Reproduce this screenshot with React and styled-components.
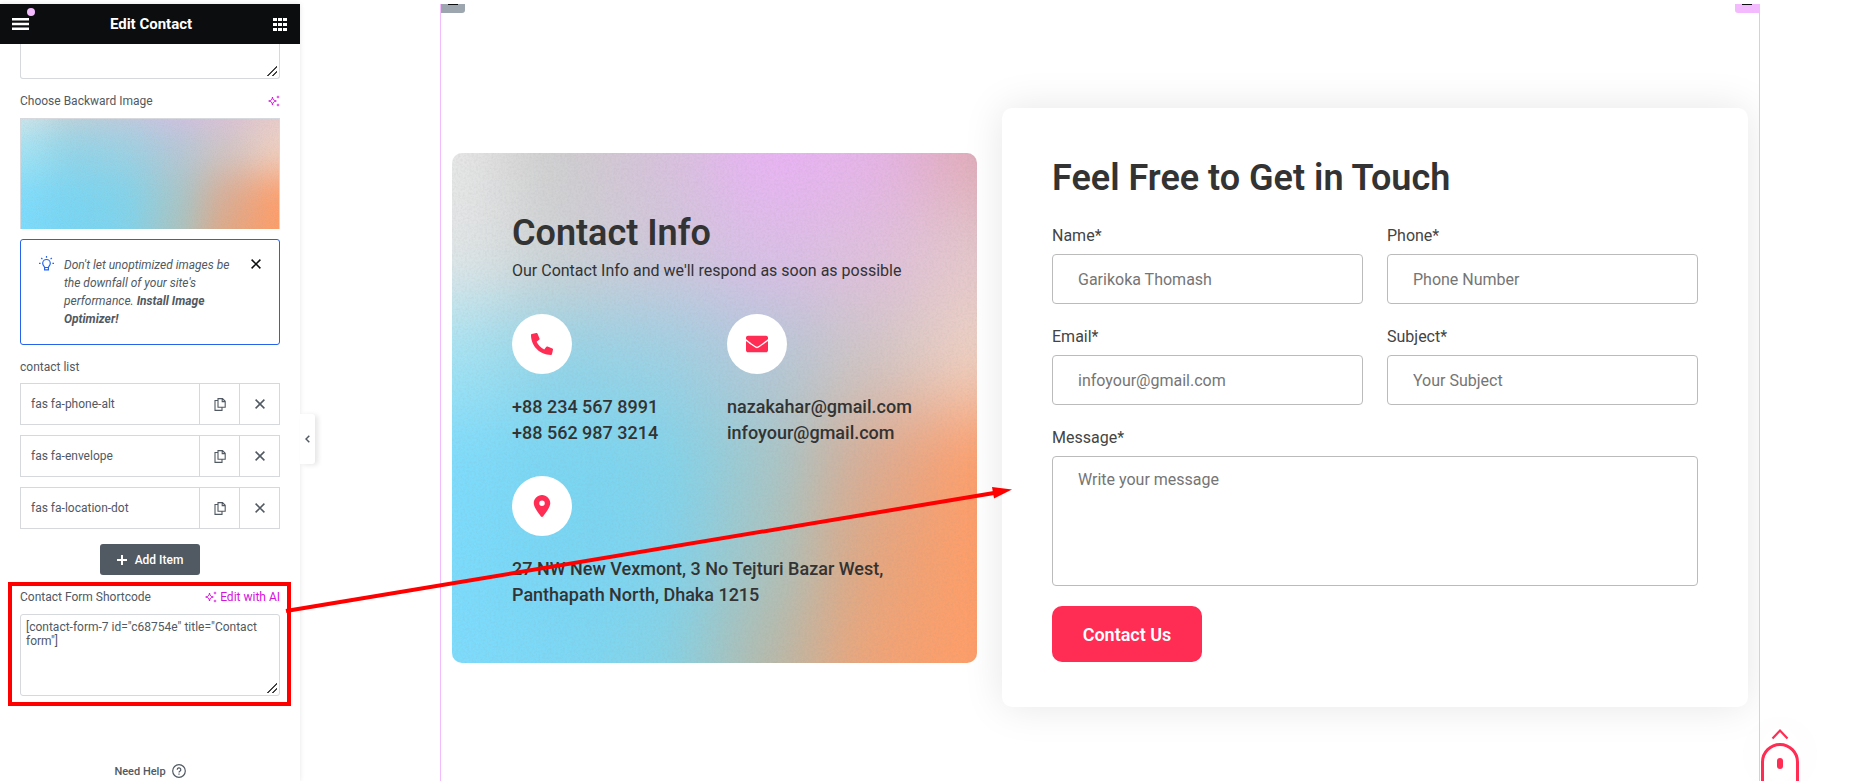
import React, { useState } from 'react';
import styled, { createGlobalStyle } from 'styled-components';
import { FaPhoneAlt, FaEnvelope } from 'react-icons/fa';
import { FaLocationDot } from 'react-icons/fa6';

const GlobalStyle = createGlobalStyle`
  * {
    box-sizing: border-box;
  }
  body {
    margin: 0;
    background: #fff;
    font-family: Roboto, "Liberation Sans", sans-serif;
  }
  button, input, textarea {
    font-family: inherit;
  }
`;

const Editor = styled.div`
  display: flex;
  height: 100vh;
  padding-top: 4px;
  overflow: hidden;
`;

/* ---------- side panel ---------- */

const Panel = styled.aside`
  display: flex;
  flex-direction: column;
  flex: 0 0 300px;
  position: relative;
  color: #515962;
  font-size: 12px;
  background: #fff;
  box-shadow: 0 0 5px rgba(0, 0, 0, 0.1);
`;

const PanelHeader = styled.header`
  display: flex;
  flex-shrink: 0;
  align-items: center;
  justify-content: space-between;
  height: 40px;
  padding: 0 13px 0 12px;
  background: #0c0d0e;
  color: #fff;
`;

const PanelTitle = styled.h1`
  margin: 0;
  font-size: 15px;
  line-height: 20px;
  font-weight: 700;
`;

const IconButton = styled.button`
  display: flex;
  align-items: center;
  justify-content: center;
  position: relative;
  padding: 0;
  border: 0;
  background: none;
  color: inherit;
  cursor: pointer;
`;

const Dot = styled.span`
  position: absolute;
  top: -10px;
  right: -6px;
  width: 8px;
  height: 8px;
  border-radius: 50%;
  background: #f3bafd;
`;

const PanelBody = styled.div`
  display: flex;
  flex-direction: column;
  flex: 1;
  min-height: 0;
  padding: 0 20px;
  overflow: hidden;
`;

const PanelTextarea = styled.textarea`
  display: block;
  width: 100%;
  height: 82px;
  padding: 5px;
  border: 1px solid #d5d8dc;
  border-radius: 3px;
  background: #fff;
  color: #515962;
  font-size: 12px;
  line-height: 14px;
  resize: vertical;

  &::-webkit-resizer {
    background: linear-gradient(
        135deg,
        transparent 46%,
        #444 46%,
        #444 56%,
        transparent 56%,
        transparent 74%,
        #444 74%,
        #444 84%,
        transparent 84%
      )
      3px 3px / 10px 10px no-repeat;
  }
`;

const ScrolledTextarea = styled(PanelTextarea)`
  height: 35px;
  flex-shrink: 0;
  border-top: 0;
  border-radius: 0 0 3px 3px;
`;

const ControlHead = styled.div`
  display: flex;
  align-items: center;
  justify-content: space-between;
  height: 16px;
  margin: ${({ $gap }) => $gap || '14px 0 9px'};
  flex-shrink: 0;
`;

const AiButton = styled(IconButton)`
  gap: 3px;
  color: #d60fdc;
  font-size: 12px;
`;

const Thumb = styled.div`
  height: 111px;
  flex-shrink: 0;
  border: 1px solid #d5d8dc;
  border-bottom: 0;

  svg {
    display: block;
    width: 100%;
    height: 100%;
  }
`;

const Notice = styled.div`
  display: flex;
  align-items: flex-start;
  flex-shrink: 0;
  margin-top: 10px;
  padding: 16px 18px;
  border: 1px solid #2563eb;
  border-radius: 3px;

  p {
    flex: 1;
    margin: 0;
    padding: 0 14px 0 10px;
    font-style: italic;
    line-height: 18px;
  }
`;

const NoticeClose = styled(IconButton)`
  color: #0c0d0e;
  margin-top: 3px;
`;

const Repeater = styled.ul`
  display: flex;
  flex-direction: column;
  flex-shrink: 0;
  gap: 10px;
  margin: 0;
  padding: 0;
  list-style: none;
`;

const RepeaterRow = styled.li`
  display: grid;
  grid-template-columns: 1fr 40px 40px;
  height: 42px;
  border: 1px solid #d5d8dc;

  button + button {
    border-left: 1px solid #d5d8dc;
  }
`;

const RepeaterTitle = styled.button`
  padding: 0 10px;
  border: 0;
  background: none;
  color: #515962;
  font-size: 12px;
  text-align: left;
`;

const AddButton = styled.button`
  display: flex;
  align-items: center;
  align-self: center;
  justify-content: center;
  flex-shrink: 0;
  gap: 8px;
  width: 100px;
  height: 31px;
  margin-top: 15px;
  border: 0;
  border-radius: 3px;
  background: #515962;
  color: #fff;
  font-size: 12px;
  font-weight: 500;
`;

const Help = styled.a`
  display: flex;
  align-items: center;
  justify-content: center;
  gap: 6px;
  margin-top: 68px;
  color: #515962;
  font-size: 11px;
  font-weight: 500;
  text-decoration: none;
`;

const Toggle = styled.button`
  position: absolute;
  top: 410px;
  left: 300px;
  display: flex;
  align-items: center;
  justify-content: center;
  width: 15px;
  height: 50px;
  padding: 0;
  border: 0;
  border-radius: 0 3px 3px 0;
  background: #fff;
  color: #515962;
  box-shadow: 3px 1px 5px rgba(0, 0, 0, 0.1);
`;

/* ---------- preview ---------- */

const Preview = styled.main`
  display: flex;
  justify-content: center;
  flex: 1;
  min-width: 0;
  padding-left: 38px;
`;

const Section = styled.section`
  display: grid;
  grid-template-columns: 525fr 746fr;
  align-items: center;
  column-gap: 25px;
  position: relative;
  width: 1320px;
  padding: 30px 11px 0;
  overflow: hidden;
  border: solid #f3bafd;
  border-width: 0 1px;
`;

const Handle = styled.span`
  position: absolute;
  top: 0;
  ${({ $side }) => $side}: 0;
  display: flex;
  justify-content: center;
  width: 24px;
  height: 9px;
  border-radius: ${({ $side }) => ($side === 'left' ? '0 0 3px 0' : '0 0 0 3px')};
  background: ${({ $side }) => ($side === 'left' ? '#9da5ae' : '#f3bafd')};

  &::before {
    content: '';
    width: 10px;
    height: 1px;
    background: #0c0d0e;
  }
`;

const InfoCard = styled.article`
  position: relative;
  min-width: 0;
  padding: 60px 60px 55px;
  border-radius: 10px;
  overflow: hidden;
  color: #333;
`;

const Backdrop = styled.div`
  position: absolute;
  inset: 0;
  z-index: -1;

  svg {
    display: block;
    width: 100%;
    height: 100%;
  }
`;

const Heading = styled.h2`
  margin: 0;
  color: #333;
  font-size: 36px;
  line-height: 40px;
  font-weight: 600;
`;

const Lead = styled.p`
  margin: 6px 0 31px;
  font-size: 16px;
  line-height: 24px;
`;

const Contacts = styled.div`
  display: grid;
  grid-template-columns: 215px 1fr;
  row-gap: 30px;
`;

const Contact = styled.address`
  grid-column: ${({ $wide }) => ($wide ? '1 / -1' : 'auto')};
  font-style: normal;
  font-size: 18px;
  line-height: 26px;
  font-weight: 500;
  white-space: nowrap;
`;

const Round = styled.span`
  display: flex;
  align-items: center;
  justify-content: center;
  width: 60px;
  height: 60px;
  margin-bottom: 20px;
  border-radius: 50%;
  background: #fff;
  color: #ff2c54;
  font-size: 22px;
`;

const FormCard = styled.form`
  display: grid;
  grid-template-columns: 1fr 1fr;
  column-gap: 24px;
  row-gap: 20px;
  min-width: 0;
  padding: 50px 50px 45px;
  border-radius: 10px;
  background: #fff;
  box-shadow: 0 0 40px rgba(0, 0, 0, 0.1);
`;

const FormHeading = styled(Heading)`
  grid-column: 1 / -1;
  margin-bottom: 5px;
`;

const Field = styled.label`
  display: flex;
  flex-direction: column;
  grid-column: ${({ $wide }) => ($wide ? '1 / -1' : 'auto')};
  gap: 5px;
  color: #444;
  font-size: 16px;
  line-height: 26px;
`;

const Input = styled.input`
  width: 100%;
  height: 50px;
  padding: 1px 25px 0;
  border: 1px solid #bbb;
  border-radius: 4px;
  background: #fff;
  font-size: 16px;

  &::placeholder {
    color: #757575;
  }
`;

const Message = styled(Input)`
  height: 130px;
  padding: 10px 25px;
  line-height: 26px;
  resize: none;
`;

const Submit = styled.button`
  justify-self: start;
  width: 150px;
  height: 56px;
  border: 0;
  border-radius: 10px;
  background: #ff2c54;
  color: #fff;
  font-size: 18px;
  font-weight: 600;
`;

const ScrollTop = styled.a`
  position: fixed;
  right: 62px;
  bottom: 0;
  height: 53px;
  border-radius: 50%;
  color: #ff2c54;
  box-shadow: 0 0 70px rgba(0, 0, 0, 0.03);
`;

const Annotation = styled.svg`
  position: absolute;
  top: 0;
  left: 0;
  pointer-events: none;
`;

/* ---------- drawings ---------- */

const MESH = [
  ['#e8e8e8', '#cecece', '#d8c2dc', '#eab3f6', '#e6b4ea', '#e2acb8'],
  ['#e4e7e8', '#cfd2d4', '#d0c8da', '#dcbfe8', '#e0c0de', '#e4c8cc'],
  ['#a4e4f4', '#93d4e8', '#9cd2e4', '#b4c8d8', '#d0c6c6', '#f0d2c4'],
  ['#7edcfc', '#7ad6f2', '#80d4ec', '#a4c8cc', '#dcac92', '#ff9e6a'],
  ['#7cdcfc', '#78d6f4', '#80d4ee', '#a8c4c2', '#e6a67e', '#ff9e68'],
  ['#7edcfc', '#7cd8f6', '#84d4e8', '#b6baac', '#f2a476', '#ff9e68'],
];

const MeshImage = ({ id }) => (
  <svg viewBox="0 0 525 510" preserveAspectRatio="xMidYMid slice" aria-hidden="true">
    <defs>
      <filter id={`${id}-blur`} filterUnits="userSpaceOnUse" x="-150" y="-150" width="825" height="810" colorInterpolationFilters="sRGB">
        <feGaussianBlur stdDeviation="38" />
      </filter>
      <filter id={`${id}-grain`} x="0" y="0" width="100%" height="100%">
        <feTurbulence type="fractalNoise" baseFrequency="0.45" numOctaves="2" seed="4" />
        <feColorMatrix values="0 0 0 0 0.3  0 0 0 0 0.3  0 0 0 0 0.3  0.5 0 0 0 -0.2" />
      </filter>
    </defs>
    <g filter={`url(#${id}-blur)`}>
      {MESH.map((row, r) =>
        row.map((fill, c) => {
          const x = c === 0 ? -300 : c * 105 - 53;
          const y = r === 0 ? -300 : r * 102 - 51;
          return <rect key={`${r}-${c}`} x={x} y={y} width="900" height="900" fill={fill} />;
        })
      )}
    </g>
    <rect width="525" height="510" filter={`url(#${id}-grain)`} opacity="0.5" />
  </svg>
);

const MenuIcon = () => (
  <svg width="17" height="12" viewBox="0 0 17 12" fill="currentColor">
    <path d="M0 0h17v2.500H0zM0 4.750h17v2.500H0zM0 9.500h17V12H0z" />
  </svg>
);

const AppsIcon = () => (
  <svg width="14" height="13" viewBox="0 0 14 13" fill="currentColor">
    {[0, 5, 10].map((y) => (
      <path key={y} d={`M0 ${y}h4v3H0zM5 ${y}h4v3H5zM10 ${y}h4v3h-4z`} />
    ))}
  </svg>
);

const SparkleIcon = () => (
  <svg width="12" height="12" viewBox="0 0 12 12" fill="none" stroke="currentColor">
    <path d="M4.500 2C4.900 4.700 5.800 5.600 8.300 6C5.800 6.400 4.900 7.300 4.500 10C4.100 7.300 3.200 6.400.7 6C3.200 5.600 4.100 4.700 4.500 2Z" />
    <path fill="currentColor" stroke="none" d="M10 .3l.5 1.200 1.300.5-1.300.5L10 3.700l-.5-1.200L8.200 2l1.300-.5zM10 8.300l.5 1.200 1.300.5-1.300.5-.5 1.200-.5-1.200-1.300-.5 1.300-.5z" />
  </svg>
);

const BulbIcon = () => (
  <svg width="15" height="16" viewBox="0 0 15 16" fill="none" stroke="#2563eb" strokeWidth="1.200">
    <path d="M5.600 11.500C5.500 10.300 3.700 9.600 3.700 7.300a3.800 3.800 0 0 1 7.600 0c0 2.300-1.800 3-1.900 4.200zM5.600 11.500v2.300h3.800v-2.300" />
    <path d="M7.500 0v1.700M0 7.300h1.600M13.400 7.300H15M2.200 2l1.200 1.200M12.800 2l-1.200 1.200" />
  </svg>
);

const CloseIcon = ({ size = 10 }) => (
  <svg width={size} height={size} viewBox="0 0 10 10" fill="none" stroke="currentColor" strokeWidth="1.500">
    <path d="M.6.6l8.800 8.800M9.400.6L.6 9.400" />
  </svg>
);

const CopyIcon = () => (
  <svg width="12" height="13" viewBox="0 0 12 13" fill="none" stroke="currentColor" strokeWidth="1.100">
    <path d="M4 .6h4.500l2.700 2.700v6H4zM8.200.8v2.800h2.900M4 2.500H1v9.900h7V9.500" />
  </svg>
);

const HelpIcon = () => (
  <svg width="14" height="14" viewBox="0 0 14 14" fill="none" stroke="currentColor" strokeWidth="1.200">
    <circle cx="7" cy="7" r="6.300" />
    <path d="M5.200 5.700a1.800 1.800 0 1 1 2.700 1.500c-.6.400-.9.600-.9 1.300M7 9.500v1.200" />
  </svg>
);

const MouseIcon = () => (
  <svg width="40" height="53" viewBox="0 0 40 53" fill="none" stroke="currentColor" strokeWidth="3">
    <path d="M12.500 10.500L20 2.500l7.500 8" strokeWidth="2.200" />
    <path d="M2.500 56V34a17.500 17.500 0 0 1 35 0v22" />
    <rect x="17" y="30" width="6" height="11" rx="3" fill="currentColor" stroke="none" />
  </svg>
);

/* ---------- content ---------- */

const ICONS = ['fas fa-phone-alt', 'fas fa-envelope', 'fas fa-location-dot'];

const FIELDS = [
  { name: 'name', label: 'Name*', placeholder: 'Garikoka Thomash' },
  { name: 'phone', label: 'Phone*', placeholder: 'Phone Number' },
  { name: 'email', label: 'Email*', placeholder: 'infoyour@gmail.com' },
  { name: 'subject', label: 'Subject*', placeholder: 'Your Subject' },
];

const EditPanel = () => {
  const [shortcode, setShortcode] = useState('[contact-form-7 id="c68754e" title="Contact form"]');

  return (
    <Panel>
      <PanelHeader>
        <IconButton aria-label="Menu">
          <MenuIcon />
          <Dot />
        </IconButton>
        <PanelTitle>Edit Contact</PanelTitle>
        <IconButton aria-label="Widgets">
          <AppsIcon />
        </IconButton>
      </PanelHeader>
      <PanelBody>
        <ScrolledTextarea aria-label="Description" />
        <ControlHead>
          <span>Choose Backward Image</span>
          <AiButton aria-label="Edit image with AI">
            <SparkleIcon />
          </AiButton>
        </ControlHead>
        <Thumb>
          <MeshImage id="thumb" />
        </Thumb>
        <Notice>
          <BulbIcon />
          <p>
            Don't let unoptimized images be the downfall of your site's performance.{' '}
            <strong>Install Image Optimizer!</strong>
          </p>
          <NoticeClose aria-label="Dismiss">
            <CloseIcon />
          </NoticeClose>
        </Notice>
        <ControlHead $gap="14px 0 8px">
          <span>contact list</span>
        </ControlHead>
        <Repeater>
          {ICONS.map((icon) => (
            <RepeaterRow key={icon}>
              <RepeaterTitle>{icon}</RepeaterTitle>
              <IconButton aria-label="Duplicate">
                <CopyIcon />
              </IconButton>
              <IconButton aria-label="Remove">
                <CloseIcon />
              </IconButton>
            </RepeaterRow>
          ))}
        </Repeater>
        <AddButton>
          <svg width="10" height="10" viewBox="0 0 10 10" fill="none" stroke="currentColor" strokeWidth="2">
            <path d="M5 0v10M0 5h10" />
          </svg>
          Add Item
        </AddButton>
        <ControlHead>
          <label htmlFor="shortcode">Contact Form Shortcode</label>
          <AiButton>
            <SparkleIcon />
            Edit with AI
          </AiButton>
        </ControlHead>
        <PanelTextarea id="shortcode" value={shortcode} onChange={(e) => setShortcode(e.target.value)} />
        <Help href="#help">
          Need Help
          <HelpIcon />
        </Help>
      </PanelBody>
      <Toggle aria-label="Hide panel">
        <svg width="5" height="8" viewBox="0 0 5 8" fill="none" stroke="currentColor" strokeWidth="1.500">
          <path d="M4.300.8L1 4l3.300 3.200" />
        </svg>
      </Toggle>
    </Panel>
  );
};

const ContactInfo = () => (
  <InfoCard>
    <Backdrop>
      <MeshImage id="card" />
    </Backdrop>
    <Heading>Contact Info</Heading>
    <Lead>Our Contact Info and we'll respond as soon as possible</Lead>
    <Contacts>
      <Contact>
        <Round><FaPhoneAlt /></Round>
        +88 234 567 8991<br />
        +88 562 987 3214
      </Contact>
      <Contact>
        <Round><FaEnvelope /></Round>
        nazakahar@gmail.com<br />
        infoyour@gmail.com
      </Contact>
      <Contact $wide>
        <Round><FaLocationDot /></Round>
        27 NW New Vexmont, 3 No Tejturi Bazar West,<br />
        Panthapath North, Dhaka 1215
      </Contact>
    </Contacts>
  </InfoCard>
);

const ContactForm = () => (
  <FormCard onSubmit={(e) => e.preventDefault()}>
    <FormHeading>Feel Free to Get in Touch</FormHeading>
    {FIELDS.map(({ name, label, placeholder }) => (
      <Field key={name}>
        {label}
        <Input name={name} placeholder={placeholder} />
      </Field>
    ))}
    <Field $wide>
      Message*
      <Message as="textarea" name="message" placeholder="Write your message" />
    </Field>
    <Submit type="submit">Contact Us</Submit>
  </FormCard>
);

const App = () => (
  <>
    <GlobalStyle />
    <Editor>
      <EditPanel />
      <Preview>
        <Section>
          <Handle $side="left" />
          <Handle $side="right" />
          <ContactInfo />
          <ContactForm />
        </Section>
      </Preview>
      <ScrollTop href="#top" aria-label="Back to top">
        <MouseIcon />
      </ScrollTop>
      <Annotation width="1020" height="720" viewBox="0 0 1020 720" fill="none" stroke="#f00" strokeWidth="4">
        <rect x="10" y="584" width="279" height="120" />
        <path d="M286 611L994 493" />
        <path d="M992 487l20 2.500-18 9z" fill="#f00" stroke="none" />
      </Annotation>
    </Editor>
  </>
);

export default App;
